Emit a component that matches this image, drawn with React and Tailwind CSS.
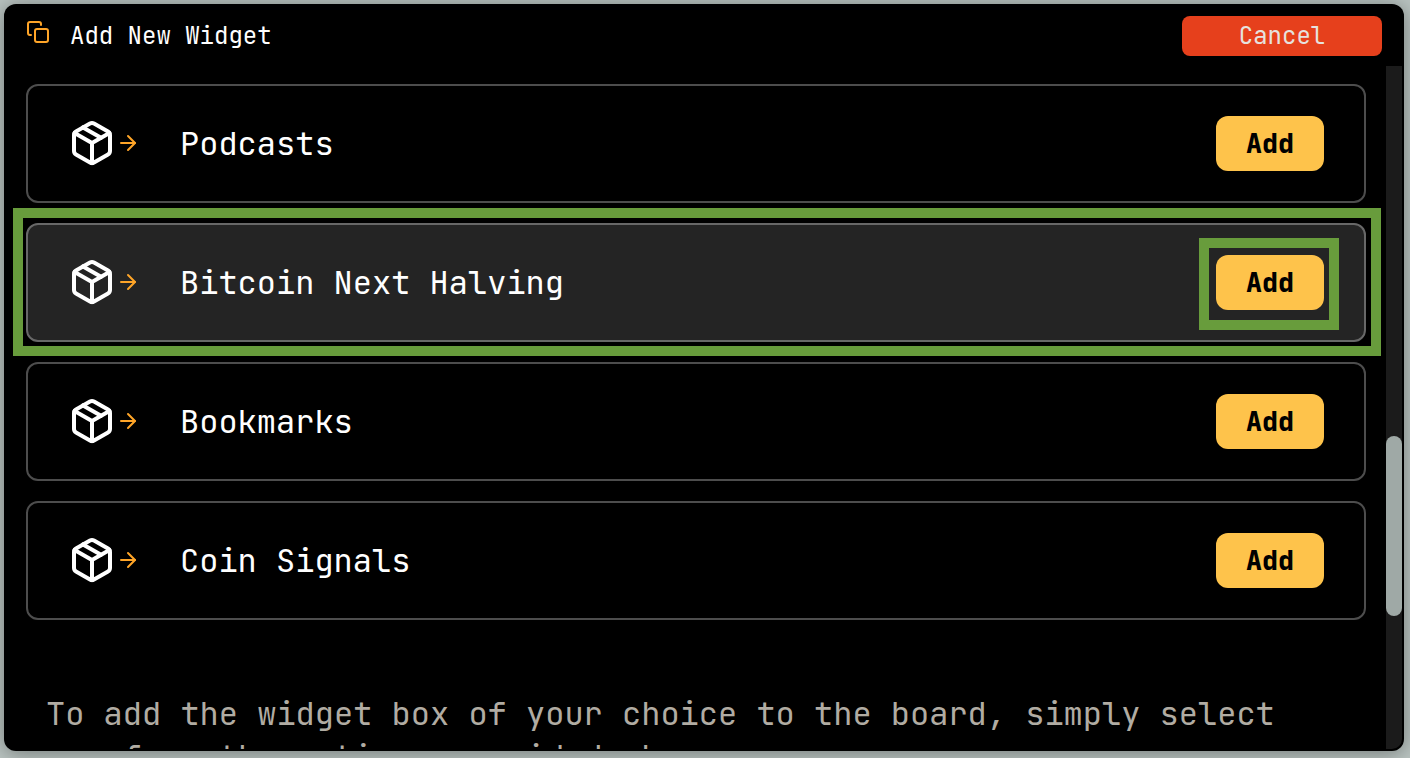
import { FiArrowRight, FiCopy, FiPackage } from "react-icons/fi";

const widgets = [
  { name: "Podcasts" },
  { name: "Bitcoin Next Halving", active: true },
  { name: "Bookmarks" },
  { name: "Coin Signals" },
];

function WidgetRow({ name, active }) {
  return (
    <li
      className={`relative flex h-[119px] items-center rounded-[12px] border-2 pr-10 pl-10 ${
        active ? "border-[#686868] bg-[#242424]" : "border-[#4d4d4d] bg-black"
      }`}
    >
      <FiPackage className="mb-0.5 size-12 shrink-0 text-white" />
      <FiArrowRight className="mb-0.5 size-6 shrink-0 text-[#ffa528]" />
      <span className="ml-10 flex-1 text-[32px] leading-[40px] text-white">
        {name}
      </span>
      <button className="relative h-[55px] w-[108px] rounded-[12px] bg-[#fec34b] text-[26.6px] leading-[55px] font-extrabold text-black">
        Add
        {active && (
          <span className="pointer-events-none absolute -top-[17px] -right-[15px] -bottom-[20px] -left-[17px] border-10 border-[#689c3c]" />
        )}
      </button>
      {active && (
        <span className="pointer-events-none absolute -top-[17px] -right-[17px] -bottom-[16px] -left-[15px] border-10 border-[#689c3c]" />
      )}
    </li>
  );
}

export default function App() {
  return (
    <div className="h-[758px] w-[1410px] overflow-hidden bg-[#b9c3c0] px-[4px] pt-[4px] pr-[6px] font-['JetBrains_Mono','DejaVu_Sans_Mono',monospace]">
      <section className="flex h-[747px] w-[1400px] flex-col overflow-hidden rounded-[12px] bg-black pr-[2px] pb-[2px] shadow-[0_2px_20px_rgba(0,0,0,0.38)]">
        <header className="flex h-[62px] shrink-0 items-start pr-5 pl-[22px]">
          <FiCopy className="mt-4 size-6 text-[#ffa528]" />
          <h1 className="mt-[12px] ml-5 flex-1 text-[24px] leading-[40px] text-white">
            Add New Widget
          </h1>
          <button className="mt-3 h-10 w-[200px] rounded-[8px] bg-[#e6401c] text-[24px] leading-[40px] text-[#e6e2df]">
            Cancel
          </button>
        </header>
        <div className="flex min-h-0 flex-1">
          <div className="flex-1 overflow-hidden pt-[18px] pr-5 pl-[22px]">
            <ul className="flex flex-col gap-5">
              {widgets.map((w) => (
                <WidgetRow key={w.name} {...w} />
              ))}
            </ul>
            <p className="mt-[72px] pl-5 text-[32px] leading-[43.2px] whitespace-nowrap text-[#b1aca3]">
              To add the widget box of your choice to the board, simply select
              <br />
              one from the options provided above.
            </p>
          </div>
          <div className="w-4 shrink-0 rounded-br-[10px] bg-[#1b1b1b] pt-[370px]">
            <div className="h-[180px] rounded-full bg-[#9fa9a6]" />
          </div>
        </div>
      </section>
    </div>
  );
}
